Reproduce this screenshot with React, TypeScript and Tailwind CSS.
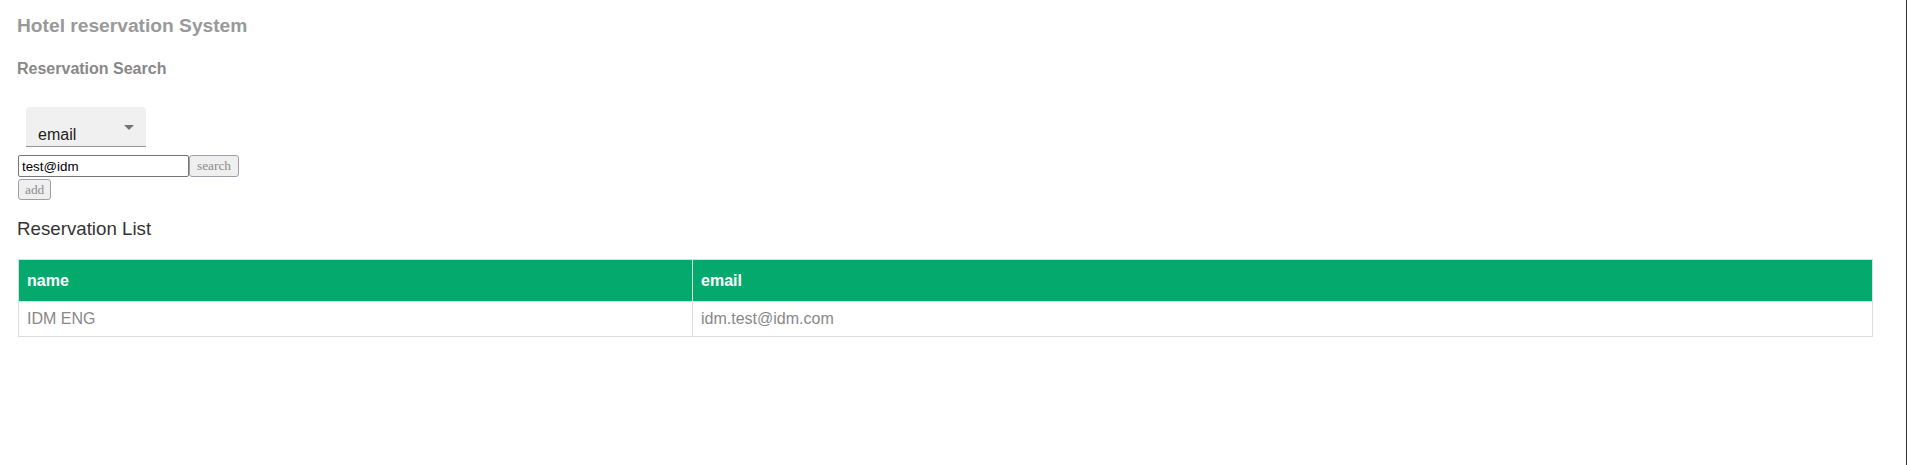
import React from "react";

export default function App() {
  return (
    <div
      className="w-[1907px] h-[465px] bg-white border-r border-[#333333] pl-[17px] pr-[33px] pt-[15px]"
      style={{ fontFamily: '"Liberation Sans", Arial, sans-serif' }}
    >
      <div className="text-[19.2px] leading-[22px] font-bold text-[#999999]">Hotel reservation System</div>
      <div className="mt-[22px] text-[16px] leading-[19px] font-bold text-[#888888]">Reservation Search</div>

      <div className="mt-[29px] ml-[9px] w-[120px] h-[40px] bg-[#f0f0f0] rounded-t-[4px] border-b border-[#949494] flex pl-[12px] pr-[5px]">
        <div className="pt-[16px] text-[16px] leading-[23px] text-[#212121]">email</div>
        <svg className="ml-auto mt-[8px]" width="24" height="24" viewBox="0 0 24 24">
          <path d="M7 10l5 5 5-5z" fill="#757575" />
        </svg>
      </div>

      <div className="mt-[8px] ml-[1px] flex">
        <input
          defaultValue="test@idm"
          className="w-[171px] h-[22px] border border-[#767676] rounded-[2px] px-[3px] text-[13.333px] text-black outline-none bg-white"
          style={{ fontFamily: '"Liberation Sans", Arial, sans-serif' }}
        />
        <button
          className="h-[22px] px-[7px] border border-[#a09ea8] rounded-[3px] bg-[#efefef] text-[13.333px] leading-[18px] text-[#8c8c8c]"
          style={{ fontFamily: '"Liberation Serif", "Times New Roman", serif' }}
        >
          search
        </button>
      </div>
      <div className="ml-[1px]">
        <button
          className="h-[21px] px-[6px] border border-[#a09ea8] rounded-[3px] bg-[#efefef] text-[13.333px] leading-[17px] text-[#8c8c8c]"
          style={{ fontFamily: '"Liberation Serif", "Times New Roman", serif' }}
        >
          add
        </button>
      </div>

      <div className="mt-[17px] text-[18.72px] leading-[22px] text-[#333333]">Reservation List</div>

      <table className="mt-[19px] ml-[1px] w-[1855px] border-collapse table-fixed text-[16px] leading-[18px]">
        <thead>
          <tr>
            <th className="w-[674px] border border-[#dddddd] bg-[#04AA6D] text-white text-left font-bold px-[8px] pt-[12px] pb-[11px]">name</th>
            <th className="border border-[#dddddd] bg-[#04AA6D] text-white text-left font-bold px-[8px] pt-[12px] pb-[11px]">email</th>
          </tr>
        </thead>
        <tbody>
          <tr>
            <td className="border border-[#dddddd] px-[8px] pt-[8px] pb-[8px] text-[#888888]">IDM ENG</td>
            <td className="border border-[#dddddd] px-[8px] pt-[8px] pb-[8px] text-[#888888]">idm.test@idm.com</td>
          </tr>
        </tbody>
      </table>
    </div>
  );
}
